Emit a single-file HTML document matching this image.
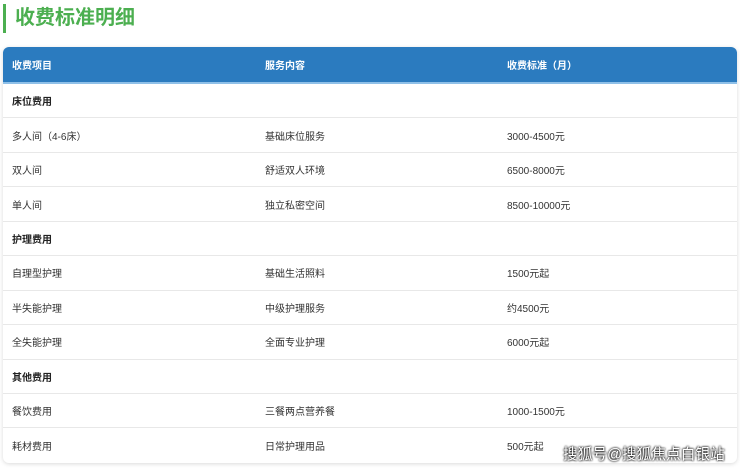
<!DOCTYPE html><html><head><meta charset="utf-8"><style>
body{margin:0;width:740px;height:468px;background:#fff;font-family:"Liberation Sans","Noto Sans CJK SC",sans-serif;overflow:hidden;position:relative}
.bar{position:absolute;left:3px;top:4px;width:3px;height:29px;background:#4caf50}
h1{position:absolute;left:15px;top:4px;margin:0;font-size:20px;line-height:29px;color:#4caf50;font-weight:bold}
.tbl{position:absolute;left:3px;top:47px;width:734px;height:416px;border-radius:6px;overflow:hidden;box-shadow:0 1px 4px rgba(0,0,0,.15)}
table{border-collapse:collapse;width:100%;font-size:10px;color:#333}
th{background:#2b7bbf;color:#fff;text-align:left;height:35px;padding:0 0 0 9px;font-weight:bold;border-bottom:2px solid #8fc0e8}
td{height:33.45px;padding:0 0 0 9px;border-bottom:1px solid #e8e8e8}
td.g{font-weight:bold;color:#222}
.c1{width:244px}.c2{width:233px}
.wm{position:absolute;left:563px;top:443px;font-size:14.7px;color:#fff;text-shadow:0 0 2px #000,0 0 2px #000}
</style></head><body>
<div class="bar"></div><h1>收费标准明细</h1>
<div class="tbl"><table>
<tr><th class="c1">收费项目</th><th class="c2">服务内容</th><th>收费标准（月）</th></tr>
<tr><td class="g" colspan="3">床位费用</td></tr>
<tr><td>多人间（4-6床）</td><td>基础床位服务</td><td>3000-4500元</td></tr>
<tr><td>双人间</td><td>舒适双人环境</td><td>6500-8000元</td></tr>
<tr><td>单人间</td><td>独立私密空间</td><td>8500-10000元</td></tr>
<tr><td class="g" colspan="3">护理费用</td></tr>
<tr><td>自理型护理</td><td>基础生活照料</td><td>1500元起</td></tr>
<tr><td>半失能护理</td><td>中级护理服务</td><td>约4500元</td></tr>
<tr><td>全失能护理</td><td>全面专业护理</td><td>6000元起</td></tr>
<tr><td class="g" colspan="3">其他费用</td></tr>
<tr><td>餐饮费用</td><td>三餐两点营养餐</td><td>1000-1500元</td></tr>
<tr><td style="border:none">耗材费用</td><td style="border:none">日常护理用品</td><td style="border:none">500元起</td></tr>
</table></div>
<div class="wm">搜狐号@搜狐焦点白银站</div>
</body></html>
